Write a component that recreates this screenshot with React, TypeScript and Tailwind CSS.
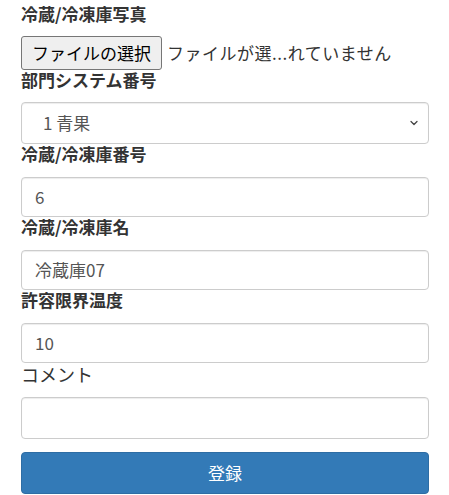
import { ChevronDown } from 'lucide-react';

const font = { fontFamily: '"Noto Sans CJK JP", "Noto Sans", sans-serif' };

const Label = ({ children }: { children: React.ReactNode }) => (
	<label className="block text-[17px] font-bold leading-[20px] text-[#333] mb-[13px]">{children}</label>
);

const TextInput = ({ value, tall }: { value: string; tall?: boolean }) => (
	<div
		className={`${tall ? 'h-[42px]' : 'h-[40px]'} w-full rounded-[4px] border border-[#ccc] bg-white px-[13px] flex items-center text-[17px] text-[#555] shadow-[inset_0_1px_1px_rgba(0,0,0,0.075)]`}
	>
		{value}
	</div>
);

export default function App() {
	return (
		<div className="w-[449px] h-[495px] bg-white pl-[21px] pr-[20px] pt-[4px] overflow-hidden" style={font}>
			<label className="block text-[17px] font-bold leading-[20px] text-[#333] mb-[12px]">冷蔵/冷凍庫写真</label>
			<div className="flex items-center h-[34px]">
				<span className="h-[34px] px-[10px] flex items-center rounded-[3px] border border-[#767676] bg-[#efefef] text-[17px] text-black">
					ファイルの選択
				</span>
				<span className="ml-[5px] text-[17px] tracking-[0.5px] text-[#333]">ファイルが選...れていません</span>
			</div>
			<label className="block text-[17px] font-bold leading-[20px] text-[#333] mb-[12px]">部門システム番号</label>
			<div className="h-[42px] w-full rounded-[4px] border border-[#ccc] bg-white pl-[21px] pr-[8px] flex items-center justify-between text-[17px] text-[#555] shadow-[inset_0_1px_1px_rgba(0,0,0,0.075)]">
				<span>1 青果</span>
				<ChevronDown size={12} strokeWidth={2.5} className="text-[#444]" />
			</div>
			<Label>冷蔵/冷凍庫番号</Label>
			<TextInput value="6" />
			<Label>冷蔵/冷凍庫名</Label>
			<TextInput value="冷蔵庫07" />
			<Label>許容限界温度</Label>
			<TextInput value="10" />
			<label className="block text-[18px] leading-[22px] text-[#333] mb-[12px]">コメント</label>
			<TextInput value="" tall />
			<button className="mt-[13px] h-[42px] w-full rounded-[4px] border border-[#2e6da4] bg-[#337ab7] text-[17px] text-white">
				登録
			</button>
		</div>
	);
}
